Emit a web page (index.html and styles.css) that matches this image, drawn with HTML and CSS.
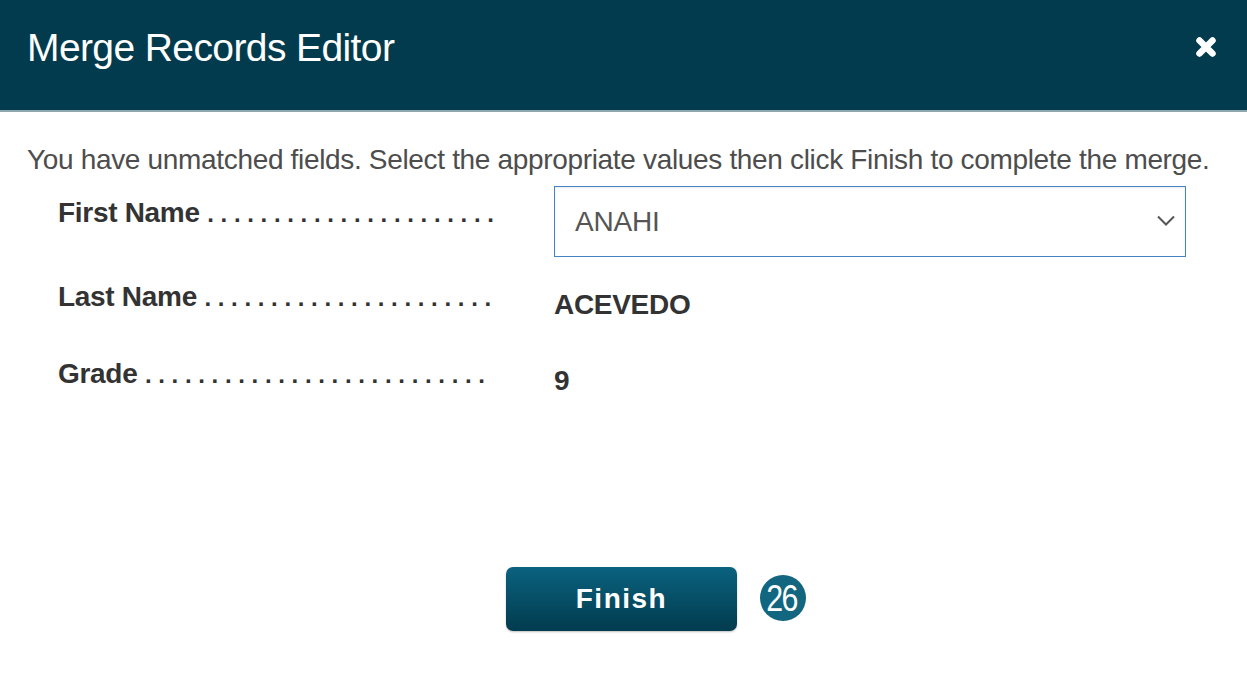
FILE: index.html
```html
<!DOCTYPE html>
<html>
<head>
<meta charset="utf-8">
<link rel="stylesheet" href="styles.css">
</head>
<body>
<div class="dialog">
  <header class="header">
    <h1 class="title">Merge Records Editor</h1>
    <svg class="close" width="22" height="22" viewBox="0 0 22 22"><path d="M4.5 4.5 L17.5 17.5 M17.5 4.5 L4.5 17.5" stroke="#fff" stroke-width="6.5" stroke-linecap="round"/></svg>
  </header>
  <main class="body">
    <p class="intro">You have unmatched fields. Select the appropriate values then click Finish to complete the merge.</p>
    <div class="fields">
      <div class="row row-first">
        <div class="label">First Name <span class="dots">. . . . . . . . . . . . . . . . . . . . . .</span></div>
        <div class="select">
          <span class="select-text">ANAHI</span>
          <svg class="chev" width="20" height="12" viewBox="0 0 20 12"><path d="M2 1.5 L10 9.5 L18 1.5" fill="none" stroke="#555" stroke-width="2"/></svg>
        </div>
      </div>
      <div class="row row-last">
        <div class="label">Last Name <span class="dots">. . . . . . . . . . . . . . . . . . . . . .</span></div>
        <div class="value">ACEVEDO</div>
      </div>
      <div class="row row-grade">
        <div class="label">Grade <span class="dots">. . . . . . . . . . . . . . . . . . . . . . . . . .</span></div>
        <div class="value">9</div>
      </div>
    </div>
    <div class="actions">
      <button class="finish">Finish</button>
      <span class="badge"><span class="badge-num">26</span></span>
    </div>
  </main>
</div>
</body>
</html>
```
FILE: styles.css
```css
* { box-sizing: border-box; }
html, body { margin: 0; padding: 0; background: #fff; }
body { font-family: "Liberation Sans", Arial, sans-serif; width: 1247px; height: 692px; overflow: hidden; }

.header {
  height: 112px;
  background: #023b4d;
  border-bottom: 2px solid #8ea6ae;
  display: flex;
  align-items: flex-start;
  justify-content: space-between;
  padding: 28px 30px 0 27px;
}
.title {
  margin: 0;
  color: #fff;
  font-weight: normal;
  font-size: 39px;
  line-height: 39px;
  letter-spacing: -0.6px;
}
.close { margin-top: 8px; display: block; }

.body { padding: 0 0 0 27px; }
.intro {
  margin: 32px 0 0;
  font-size: 28px;
  line-height: 32px;
  color: #4d4d4d;
  letter-spacing: -0.33px;
  white-space: nowrap;
}
.fields { padding-left: 31px; margin-top: 10px; }
.row {
  display: grid;
  grid-template-columns: 496px 632px;
  align-items: start;
}
.label {
  font-size: 28px;
  line-height: 32px;
  font-weight: bold;
  color: #333;
  white-space: nowrap;
  letter-spacing: -0.3px;
}
.dots { font-size: 24px; letter-spacing: 0; }
.row-first .label { padding-top: 11px; }
.row-last { margin-top: 24px; }
.row-grade { margin-top: 37px; }
.value {
  font-size: 28px;
  line-height: 32px;
  font-weight: bold;
  color: #333;
  letter-spacing: -0.3px;
}
.row-last .value { padding-top: 8px; }
.row-grade .value { padding-top: 7px; }
.select {
  height: 71px;
  border: 1.5px solid #4584c3;
  display: flex;
  align-items: center;
  justify-content: space-between;
  padding: 0 9px 0 20px;
  box-shadow: inset 0 1px 2px rgba(0,0,0,0.08);
}
.select-text { font-size: 28px; color: #555; letter-spacing: -0.2px; }
.chev { display: block; margin-top: -2px; }

.actions {
  display: flex;
  align-items: center;
  margin-top: 170px;
  padding-left: 479px;
}
.finish {
  width: 231px;
  height: 64px;
  border: none;
  border-radius: 7px;
  background: linear-gradient(#0a627f, #023b4e);
  color: #fff;
  font-family: "Liberation Sans", Arial, sans-serif;
  font-weight: bold;
  font-size: 28px;
  letter-spacing: 1.5px;
  padding: 0;
  box-shadow: 0 1px 2px rgba(0,0,0,0.25);
}
.badge {
  margin-left: 23px;
  margin-top: -3px;
  width: 46px;
  height: 46px;
  border-radius: 50%;
  background: #13667f;
  color: #fff;
  display: flex;
  align-items: center;
  justify-content: center;
}
.badge-num {
  font-size: 37px;
  line-height: 1;
  letter-spacing: -2px;
  display: block;
  transform: scaleX(0.82);
  margin-top: 1px;
  margin-left: -2px;
}
```
